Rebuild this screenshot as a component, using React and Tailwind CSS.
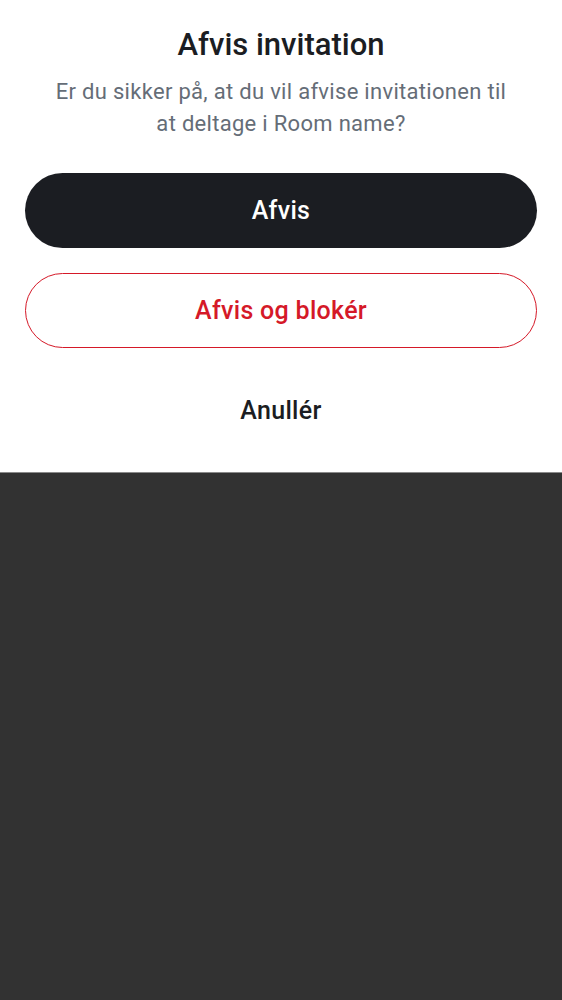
import React from "react";

export default function App() {
  return (
    <div className="min-h-screen flex flex-col bg-[#323232] font-['Roboto',sans-serif]">
      <div className="bg-white px-[25px] pt-[25px] pb-[24px] border-b border-[#8a8a8a] flex flex-col items-center">
        <h1 className="text-[31px] leading-[40px] font-medium text-[#1b1d22] text-center">
          Afvis invitation
        </h1>
        <p className="mt-[11px] text-[22px] leading-[32px] tracking-[0.3px] text-[#656d77] text-center px-[28px]">
          Er du sikker på, at du vil afvise invitationen til at deltage i Room name?
        </p>
        <div className="mt-[33px] w-full flex flex-col gap-[25px]">
          <button className="h-[75px] w-full rounded-full bg-[#1b1d22] text-white text-[25px] tracking-[0.3px] font-medium">
            Afvis
          </button>
          <button className="h-[75px] w-full rounded-full border border-[#d51928] text-[#d51928] text-[25px] tracking-[0.3px] font-medium">
            Afvis og blokér
          </button>
          <button className="h-[75px] w-full rounded-full text-[#1b1d22] text-[25px] tracking-[0.3px] font-medium">
            Anullér
          </button>
        </div>
      </div>
    </div>
  );
}
